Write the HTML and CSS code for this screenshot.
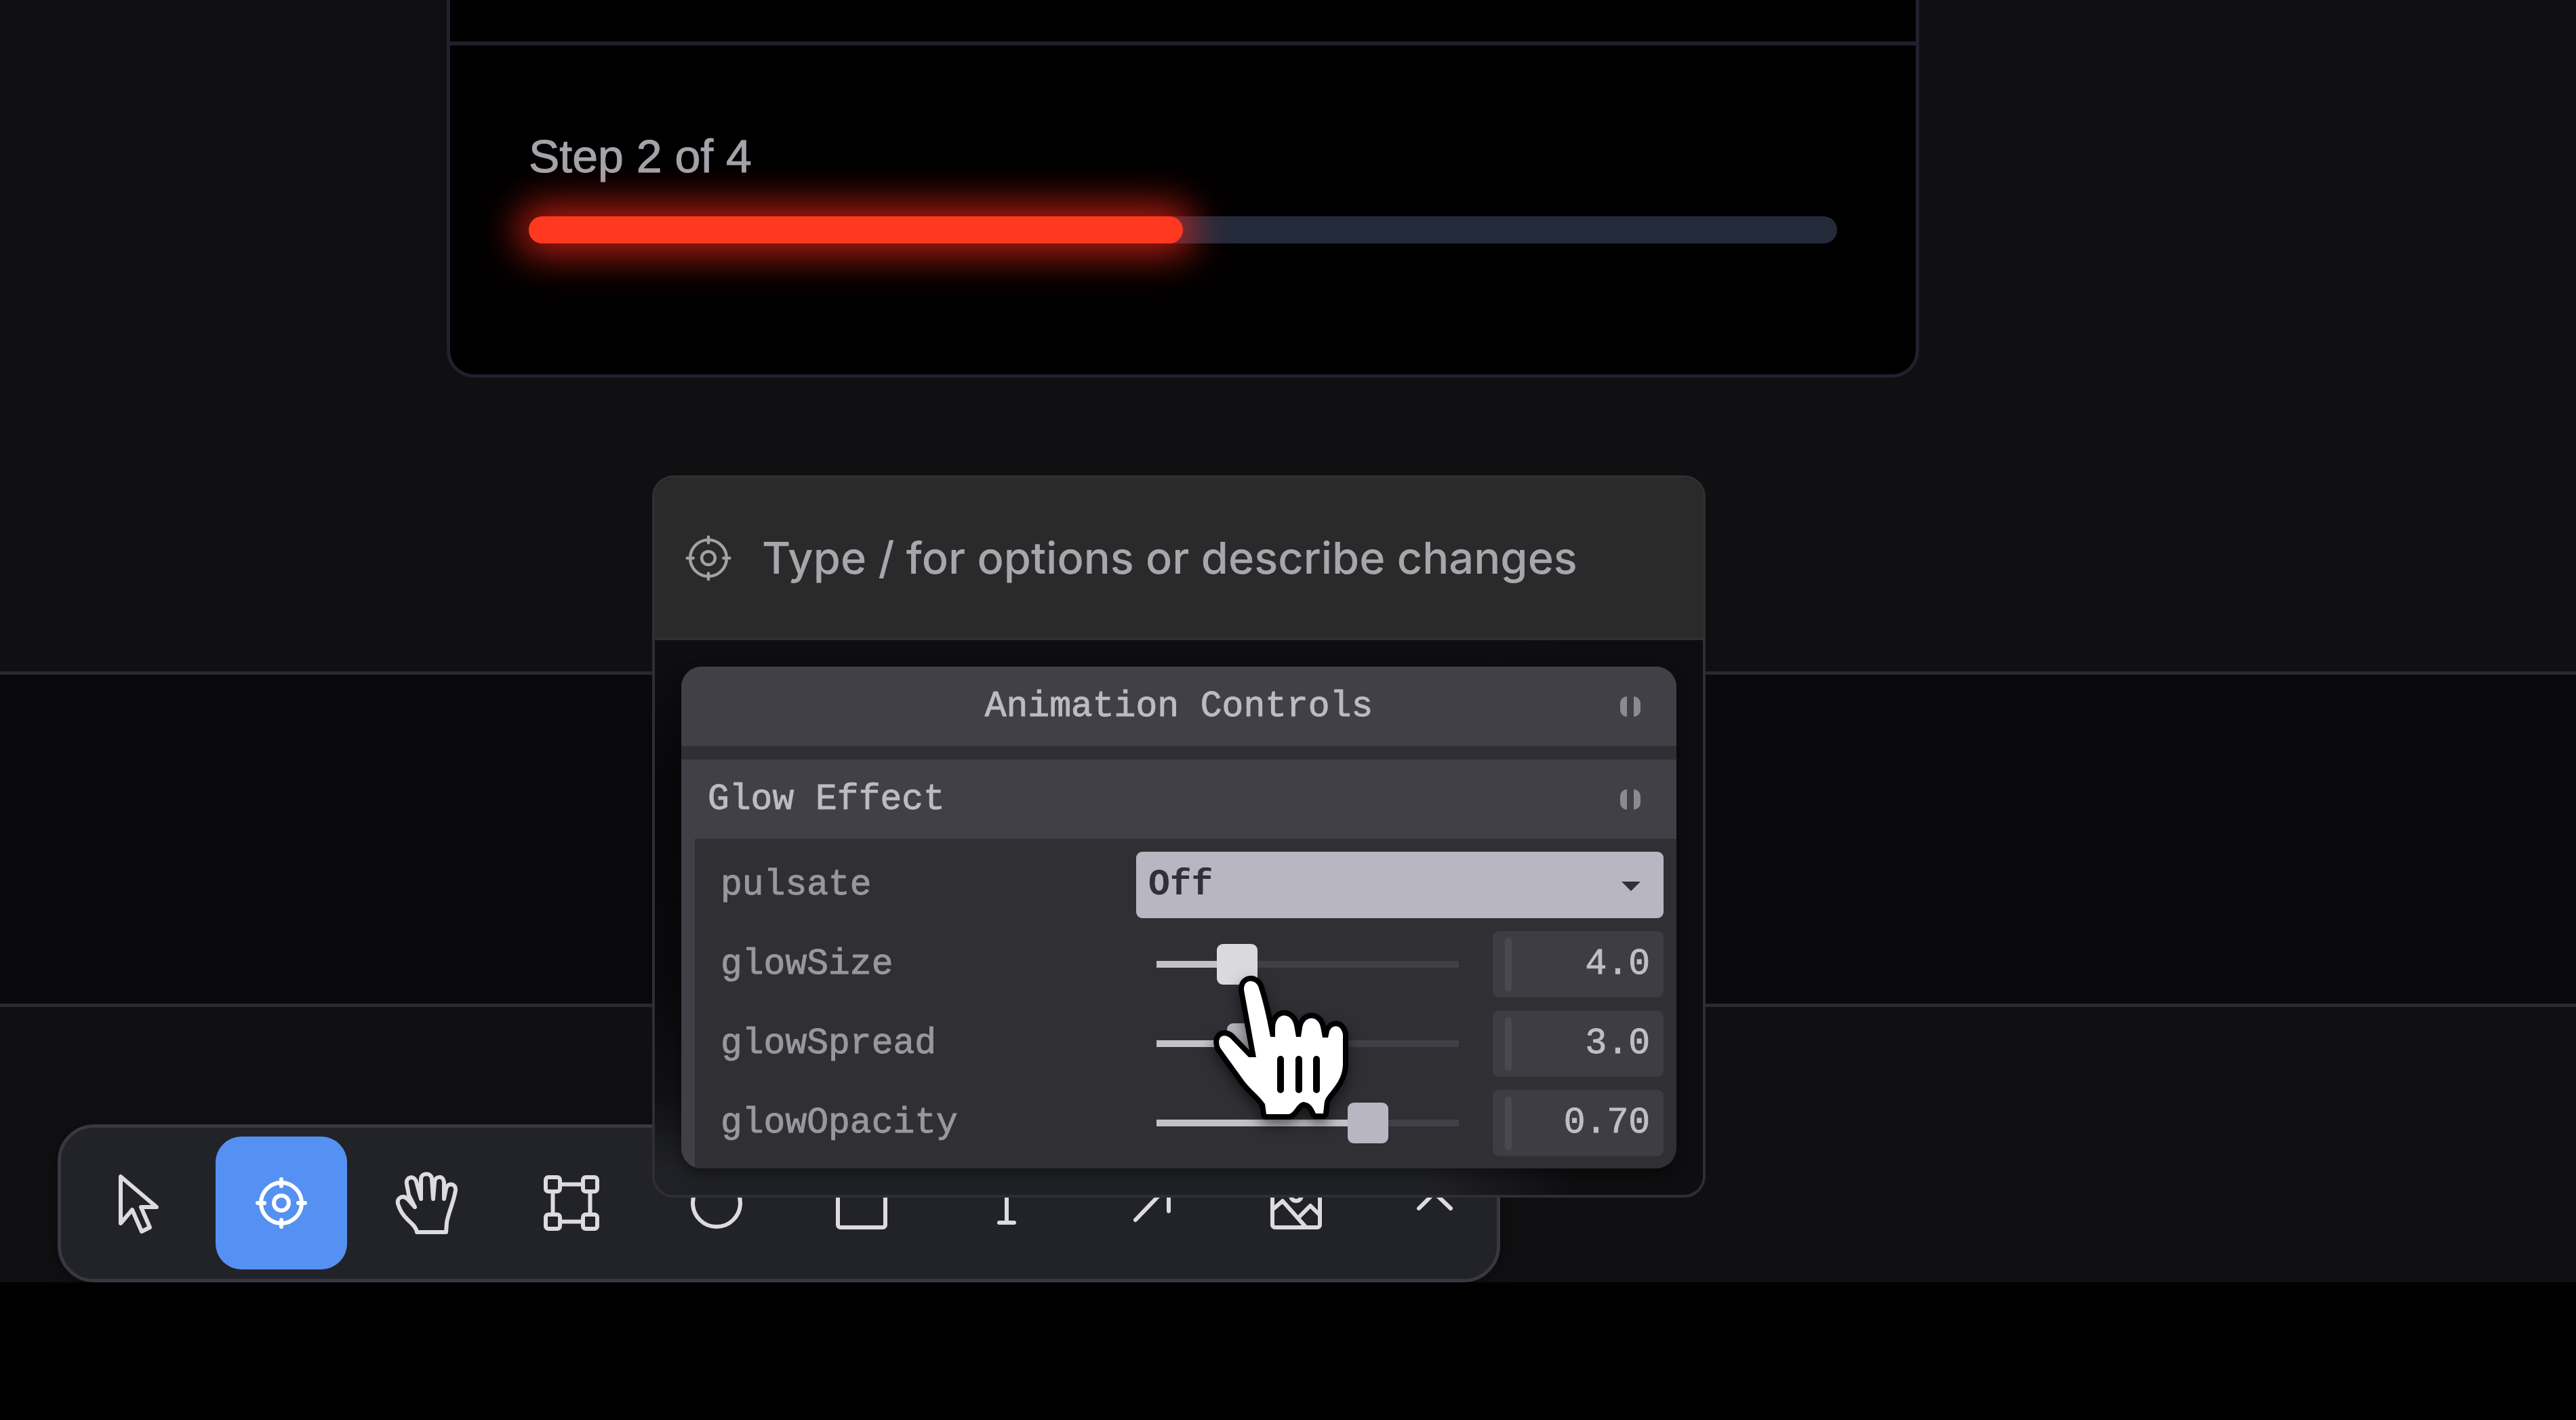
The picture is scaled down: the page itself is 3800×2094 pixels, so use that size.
FILE: index.html
```html
<!DOCTYPE html>
<html lang="en">
<head>
<meta charset="utf-8">
<meta name="viewport" content="width=device-width, initial-scale=1">
<title>Animation Controls</title>
<link rel="stylesheet" href="styles.css">
</head>
<body>
<svg class="sprite" aria-hidden="true">
  <symbol id="target" viewBox="0 0 96 96">
    <circle cx="48" cy="48" r="30"/>
    <circle cx="48" cy="48" r="11"/>
    <path d="M48 13v10M48 73v10M13 48h10M73 48h10"/>
  </symbol>
</svg>
<main class="canvas">
  <section class="band band-top">
    <article class="card">
      <div class="card-head"></div>
      <div class="card-body">
        <p class="step" id="step">Step 2 of 4</p>
        <div class="progress" role="progressbar" aria-labelledby="step" aria-valuemin="0" aria-valuemax="4" aria-valuenow="2">
          <div class="progress-fill" style="width: 50%"></div>
        </div>
      </div>
    </article>
  </section>
  <section class="band band-middle"></section>
  <section class="band band-bottom">
    <nav class="toolbar" aria-label="Tools">
      <button class="tool" type="button" aria-label="Select"><svg class="icon" viewBox="0 0 96 96"><path d="M25 9V78L42 58L56 90L68 84L55 54H78Z"/></svg></button>
      <button class="tool tool-active" type="button" aria-label="Target" aria-pressed="true"><svg class="icon" viewBox="0 0 96 96"><use href="#target"/></svg></button>
      <button class="tool" type="button" aria-label="Pan"><svg class="icon" viewBox="0 0 96 96"><path d="M34 91H77L78 77C80 63 89 45 91 29C92 19 79 17 77 27L74 42V17C73 7 61 8 60 17L58 42L56 12C55 3 41 3 40 12V42L33 16C30 7 17 9 19 20L22 36L31 54L21 43C14 35 4 40 6 49C9 59 12 64 18 70C24 77 33 82 34 91Z"/></svg></button>
      <button class="tool" type="button" aria-label="Frame"><svg class="icon" viewBox="0 0 96 96"><rect x="10" y="10" width="21" height="21" rx="4"/><rect x="65" y="10" width="21" height="21" rx="4"/><rect x="10" y="65" width="21" height="21" rx="4"/><rect x="65" y="65" width="21" height="21" rx="4"/><path d="M31 20.500H65M31 75.500H65M20.500 31V65M75.500 31V65"/></svg></button>
      <button class="tool" type="button" aria-label="Ellipse"><svg class="icon" viewBox="0 0 96 96"><circle cx="48" cy="48" r="35"/></svg></button>
      <button class="tool" type="button" aria-label="Rectangle"><svg class="icon" viewBox="0 0 96 96"><rect x="13" y="13" width="70" height="71" rx="4"/></svg></button>
      <button class="tool" type="button" aria-label="Text"><svg class="icon" viewBox="0 0 96 96"><path d="M20 30V19H76V30M48 19V77M37 77H59"/></svg></button>
      <button class="tool" type="button" aria-label="Arrow"><svg class="icon" viewBox="0 0 96 96"><path d="M24 73L73 22M35 22H73V60"/></svg></button>
      <button class="tool" type="button" aria-label="Image"><svg class="icon" viewBox="0 0 96 96"><rect x="12" y="13" width="70" height="71" rx="4"/><circle cx="47" cy="37" r="8"/><path d="M12 58L27 45L60 82M51 69L68 52L82 66"/></svg></button>
      <button class="tool tool-more" type="button" aria-label="More tools"><svg class="icon" viewBox="0 0 96 96"><path d="M25 56L48 33L72 56"/></svg></button>
    </nav>
  </section>
</main>

<aside class="popup">
  <div class="prompt">
    <svg class="prompt-icon" viewBox="0 0 96 96" aria-hidden="true"><use href="#target"/></svg>
    <input class="prompt-input" type="text" aria-label="Describe changes" placeholder="Type / for options or describe changes">
  </div>
  <div class="popup-body">
    <form class="pane">
      <button class="pane-title" type="button"><span class="title-text">Animation Controls</span><span class="mark"></span></button>
      <button class="folder-title" type="button"><span class="title-text">Glow Effect</span><span class="mark"></span></button>
      <div class="folder">
        <div class="row">
          <label for="pulsate">pulsate</label>
          <div class="select-wrap">
            <select class="select" id="pulsate"><option>Off</option><option>On</option></select>
            <svg class="caret" viewBox="0 0 28 14" aria-hidden="true"><path d="M0 0H28L14 14Z"/></svg>
          </div>
        </div>
        <div class="row">
          <label for="size">glowSize</label>
          <input class="range range-hover" id="size" type="range" min="0" max="15" step="0.1" value="4" style="--ratio: 0.267">
          <div class="value"><span class="knob"></span><input class="number" type="text" aria-label="glowSize value" value="4.0"></div>
        </div>
        <div class="row">
          <label for="spread">glowSpread</label>
          <input class="range" id="spread" type="range" min="0" max="10" step="0.1" value="3" style="--ratio: 0.3">
          <div class="value"><span class="knob"></span><input class="number" type="text" aria-label="glowSpread value" value="3.0"></div>
        </div>
        <div class="row">
          <label for="opacity">glowOpacity</label>
          <input class="range" id="opacity" type="range" min="0" max="1" step="0.01" value="0.7" style="--ratio: 0.7">
          <div class="value"><span class="knob"></span><input class="number" type="text" aria-label="glowOpacity value" value="0.70"></div>
        </div>
      </div>
    </form>
  </div>
</aside>

<svg class="pointer" viewBox="0 0 222 230" aria-hidden="true">
  <path class="pointer-hand" d="M55 30C54 13 73 13 77 27C84 49 90 76 94 99H101V86C101 62 125 62 129 82L132 99H139L141 86C144 67 164 67 168 84L171 100H179L181 91C185 80 198 80 201 95V140C200 168 179 180 174 194L172 212H161C157 203 153 196 143 195C133 196 130 211 121 213H88L86 198C77 185 66 178 56 165C43 147 30 129 20 115C14 100 24 92 35 101L62 129H73Z"/>
  <path class="pointer-lines" d="M109 132V177M136 132V177M162 132V177"/>
</svg>
</body>
</html>
```
FILE: styles.css
```css
* {
  box-sizing: border-box;
}

body {
  position: relative;
  margin: 0;
  min-height: 100vh;
  background: #000;
  color: #a1a1a6;
  font-family: Inter, "Liberation Sans", sans-serif;
}

button,
input,
select {
  margin: 0;
  padding: 0;
  border: 0;
  background: none;
  color: inherit;
  font: inherit;
}

.sprite {
  position: absolute;
  width: 0;
  height: 0;
}

.canvas {
  background: #101012;
}

.band-top {
  padding: 0 969px 433px 659px;
}

.card {
  border: 5px solid #1f212c;
  border-top: 0;
  border-radius: 0 0 40px 40px;
  background: #000;
}

.card-head {
  padding-top: 61px;
  border-bottom: 6px solid #1f202b;
}

.card-body {
  display: flex;
  flex-direction: column;
  gap: 49px;
  padding: 123px 116px 193px;
}

.step {
  margin: 0;
  color: #a3a4aa;
  font: 68px/80px "Liberation Sans", Arial, sans-serif;
  -webkit-text-stroke: 1px currentColor;
}

.progress {
  height: 40px;
  border-radius: 20px;
  background: #232b3b;
}

.progress-fill {
  height: 100%;
  border-radius: 20px;
  background: #ff391f;
  box-shadow: 0 0 56px 18px rgba(255, 40, 25, 0.7);
}

.band-middle {
  min-height: 495px;
  border: solid #29292f;
  border-width: 5px 0;
  background: #09090b;
}

.band-bottom {
  display: flex;
  padding: 173px 85px 0;
}

.toolbar {
  display: flex;
  gap: 20px;
  padding: 13px 6px 14px 14px;
  border: 5px solid #393742;
  border-radius: 54px;
  background: #222328;
  box-shadow: 0 4px 24px rgba(0, 0, 0, 0.4);
  clip-path: inset(-40px -40px 0 -40px);
}

.tool {
  display: flex;
  align-items: center;
  justify-content: center;
  width: 194px;
  height: 196px;
  border-radius: 38px;
  color: #dcdcdf;
}

.tool-active {
  background: #5591f2;
  color: #fff;
}

.tool-more {
  width: 172px;
}

.icon {
  width: 96px;
  height: 96px;
}

.icon,
.prompt-icon {
  fill: none;
  stroke: currentColor;
  stroke-width: 6;
  stroke-linecap: round;
  stroke-linejoin: round;
}

.popup {
  position: absolute;
  top: 701px;
  left: 962px;
  width: 1554px;
  border: 4px solid #2f2f32;
  border-radius: 32px;
  background: #0a0a0c;
  overflow: hidden;
}

.prompt {
  display: flex;
  align-items: center;
  gap: 36px;
  height: 239px;
  padding: 0 36px;
  border-bottom: 4px solid #2f2f31;
  background: #2a2a2a;
}

.prompt-icon {
  flex: none;
  width: 86px;
  height: 86px;
  stroke-width: 5;
}

.prompt-input {
  flex: 1;
  min-width: 0;
  height: 100px;
  font-size: 65px;
  font-weight: 500;
  outline: 0;
}

.prompt-input::placeholder {
  color: #a6a6ad;
  opacity: 1;
}

.popup-body {
  padding: 39px;
  background:
    linear-gradient(90deg, transparent 74%, #0e0e10 88%),
    linear-gradient(#0f0e12, #08080a 25%, #09090b 60%, #101013 82%, #202126 95%);
}

.pane {
  display: flex;
  flex-direction: column;
  border-radius: 30px;
  background: #302f34;
  color: #bcbbc2;
  font-family: "Liberation Mono", "Courier New", monospace;
  font-size: 53px;
  -webkit-text-stroke: 1px currentColor;
  box-shadow: 0 8px 20px rgba(0, 0, 0, 0.4);
  overflow: hidden;
}

.pane-title,
.folder-title {
  display: flex;
  align-items: center;
  height: 117px;
  padding: 0 53px 0 39px;
  background: #414046;
  text-align: left;
}

.pane-title {
  margin-bottom: 20px;
  padding-left: 83px;
  text-align: center;
}

.title-text {
  flex: 1;
}

.mark {
  width: 30px;
  height: 30px;
  border: solid #8b8a90;
  border-width: 0 10px;
  border-radius: 10px;
}

.folder {
  display: flex;
  flex-direction: column;
  gap: 19px;
  padding: 19px 19px 18px 38px;
  border-left: 20px solid #414046;
}

.row {
  display: grid;
  grid-template-columns: 1fr 506px 252px;
  column-gap: 20px;
  align-items: center;
  height: 98px;
  color: #98979d;
}

.select-wrap {
  display: flex;
  position: relative;
  grid-column: 2 / 4;
  height: 98px;
}

.select {
  flex: 1;
  padding: 0 18px;
  border-radius: 9px;
  background: #b8b7c1;
  color: #302f3a;
  font-weight: 700;
  -webkit-text-stroke: 0;
  appearance: none;
}

.caret {
  position: absolute;
  top: 44px;
  right: 34px;
  width: 28px;
  height: 14px;
  fill: #302f3a;
}

.range {
  width: 100%;
  height: 60px;
  appearance: none;
  background:
    linear-gradient(#c2c1c8, #c2c1c8) 30px center / calc((100% - 60px) * var(--ratio)) 10px no-repeat,
    linear-gradient(#414046, #414046) center / calc(100% - 60px) 10px no-repeat;
}

.range::-webkit-slider-thumb {
  width: 60px;
  height: 60px;
  border-radius: 9px;
  appearance: none;
  background: #b8b7c1;
}

.range-hover::-webkit-slider-thumb {
  background: #dad9de;
}

.value {
  display: flex;
  align-items: center;
  height: 98px;
  padding: 0 20px 0 18px;
  border-radius: 9px;
  background: #3e3d43;
  color: #bfbec5;
}

.knob {
  flex: none;
  width: 10px;
  height: 79px;
  border-radius: 5px;
  background: #4a494f;
}

.number {
  flex: 1;
  min-width: 0;
  text-align: right;
}

.pointer {
  position: absolute;
  top: 1430px;
  left: 1780px;
  width: 222px;
  height: 230px;
  overflow: visible;
  filter: drop-shadow(0 10px 10px rgba(0, 0, 0, 0.5));
  pointer-events: none;
}

.pointer-hand {
  fill: #fff;
  stroke: #000;
  stroke-width: 16;
  stroke-linejoin: round;
  paint-order: stroke;
}

.pointer-lines {
  fill: none;
  stroke: #000;
  stroke-width: 10;
  stroke-linecap: round;
}
```
